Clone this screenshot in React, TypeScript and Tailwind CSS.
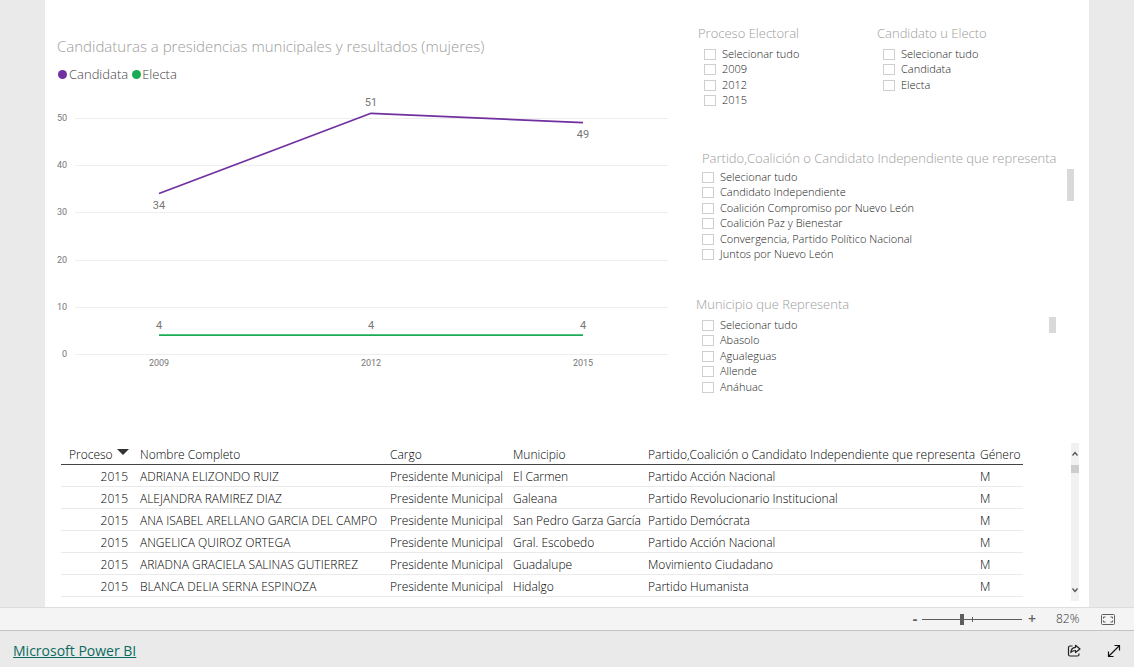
/*
 * Municipal candidacies report
 * Line chart, slicers and a detail table inside the report viewer frame
 */
type Slicer = {
  title: string;
  items: string[];
};

const process: Slicer = {
  title: "Proceso Electoral",
  items: ["Selecionar tudo", "2009", "2012", "2015"],
};

const status: Slicer = {
  title: "Candidato u Electo",
  items: ["Selecionar tudo", "Candidata", "Electa"],
};

const party: Slicer = {
  title: "Partido,Coalición o Candidato Independiente que representa",
  items: [
    "Selecionar tudo",
    "Candidato Independiente",
    "Coalición Compromiso por Nuevo León",
    "Coalición Paz y Bienestar",
    "Convergencia, Partido Político Nacional",
    "Juntos por Nuevo León",
  ],
};

const town: Slicer = {
  title: "Municipio que Representa",
  items: ["Selecionar tudo", "Abasolo", "Agualeguas", "Allende", "Anáhuac"],
};

const rows = [
  ["2015", "ADRIANA ELIZONDO RUIZ", "Presidente Municipal", "El Carmen", "Partido Acción Nacional", "M"],
  ["2015", "ALEJANDRA RAMIREZ DIAZ", "Presidente Municipal", "Galeana", "Partido Revolucionario Institucional", "M"],
  ["2015", "ANA ISABEL ARELLANO GARCIA DEL CAMPO", "Presidente Municipal", "San Pedro Garza García", "Partido Demócrata", "M"],
  ["2015", "ANGELICA QUIROZ ORTEGA", "Presidente Municipal", "Gral. Escobedo", "Partido Acción Nacional", "M"],
  ["2015", "ARIADNA GRACIELA SALINAS GUTIERREZ", "Presidente Municipal", "Guadalupe", "Movimiento Ciudadano", "M"],
  ["2015", "BLANCA DELIA SERNA ESPINOZA", "Presidente Municipal", "Hidalgo", "Partido Humanista", "M"],
];

const headers = [
  "Nombre Completo",
  "Cargo",
  "Municipio",
  "Partido,Coalición o Candidato Independiente que representa",
  "Género",
];

const years = ["2009", "2012", "2015"];
const candidates = [34, 51, 49];
const elected = [4, 4, 4];

const xAt = (i: number) => 102 + i * 212;
const yAt = (v: number) => 266 - v * 4.72;
const toPoints = (values: number[]) => values.map((v, i) => `${xAt(i)},${yAt(v)}`).join(" ");

function LineChart() {
  return (
    <svg
      viewBox="0 0 611 286"
      className="block w-full font-[Roboto,sans-serif] font-normal"
      role="img"
      aria-label="Candidaturas por año"
    >
      {[50, 40, 30, 20, 10, 0].map((v) => (
        <g key={v}>
          <line x1="18" x2="611" y1={Math.round(yAt(v)) + 0.5} y2={Math.round(yAt(v)) + 0.5} stroke="#eeeeee" />
          <text x="10" y={Math.round(yAt(v)) + 3} textAnchor="end" className="fill-[#777777] text-[9px]">
            {v}
          </text>
        </g>
      ))}
      <polyline points={toPoints(candidates)} fill="none" stroke="#7030a0" strokeWidth="1.7" strokeLinejoin="round" />
      <polyline points={toPoints(elected)} fill="none" stroke="#1aab55" strokeWidth="1.8" />
      {years.map((year, i) => (
        <g key={year} textAnchor="middle" className="fill-[#777777]">
          <text x={xAt(i)} y="278" className="text-[9px]">{year}</text>
          {/* the peak is labelled above the line, the others below */}
          <text x={xAt(i)} y={Math.round(yAt(candidates[i])) + (i === 1 ? -7 : 15)} className="text-[11px]">
            {candidates[i]}
          </text>
          <text x={xAt(i)} y="241" className="text-[11px]">{elected[i]}</text>
        </g>
      ))}
    </svg>
  );
}

function Options({ slicer }: { slicer: Slicer }) {
  return (
    <div>
      {slicer.items.map((item) => (
        <label key={item} className="flex items-center gap-[6px] text-[11px] text-[#222222] odd:h-4 even:h-[15px]">
          <input type="checkbox" className="h-[11px] w-3 shrink-0 appearance-none border border-[#cfcfcf] bg-white checked:bg-[#666666]" />
          <span className="whitespace-nowrap">{item}</span>
        </label>
      ))}
    </div>
  );
}

function Title({ text }: { text: string }) {
  return <h3 className="text-[13px] leading-5 whitespace-nowrap text-[#9c9c9c]">{text}</h3>;
}

function Chevron({ d }: { d: string }) {
  return (
    <svg viewBox="0 0 8 8" className="mx-auto size-2" fill="none" stroke="#505050" strokeWidth="1.2">
      <path d={d} />
    </svg>
  );
}

function DataTable() {
  return (
    <table className="w-full table-fixed border-separate border-spacing-0 text-left text-xs whitespace-nowrap text-black">
      <colgroup>
        <col className="w-[71px]" />
        <col className="w-[250px]" />
        <col className="w-[123px]" />
        <col className="w-[135px]" />
        <col />
        <col className="w-[51px]" />
      </colgroup>
      <thead>
        <tr className="h-[22px]">
          <th scope="col" className="border-b border-[#444444] p-0 pt-[2px] pl-2 font-light">
            <button type="button" className="flex items-center gap-1">
              Proceso
              <svg viewBox="0 0 12 12" className="size-3 shrink-0" fill="#333333">
                <path d="M0 0h12L6 6z" />
              </svg>
            </button>
          </th>
          {headers.map((h) => (
            <th key={h} scope="col" className="border-b border-[#444444] p-0 pt-[2px] pl-2 font-light">{h}</th>
          ))}
        </tr>
      </thead>
      <tbody>
        {rows.map((row) => (
          <tr key={row[1]} className="h-[22px]">
            {row.map((cell, i) => (
              <td key={i} className="border-b border-[#eaeaea] p-0 pt-[2px] pl-2 first:pr-1 first:text-right">{cell}</td>
            ))}
          </tr>
        ))}
      </tbody>
    </table>
  );
}

function StatusBar() {
  return (
    <div className="flex h-6 items-center justify-end border-t border-b border-t-[#dddddd] border-b-[#c4c4c4] bg-[#f4f4f4] pr-[19px] text-[#605e5c]">
      <button type="button" aria-label="Alejar" className="w-[14px] text-sm leading-none font-bold">-</button>
      <span className="relative flex w-[100px] items-center">
        <span className="absolute left-1/2 h-[5px] w-px bg-[#605e5c]" />
        <input
          type="range"
          aria-label="Zoom"
          min={0}
          max={100}
          defaultValue={40}
          className="h-px w-full appearance-none bg-[#605e5c] [&::-webkit-slider-thumb]:h-[11px] [&::-webkit-slider-thumb]:w-1 [&::-webkit-slider-thumb]:appearance-none [&::-webkit-slider-thumb]:bg-[#605e5c]"
        />
      </span>
      <button type="button" aria-label="Acercar" className="w-5 text-sm leading-none font-semibold">+</button>
      <span className="ml-[14px] w-[45px] text-xs text-[#333333]">82%</span>
      <button type="button" aria-label="Ajustar a la página">
        <svg viewBox="0 0 14 11" className="h-[11px] w-[14px]" fill="none" stroke="#605e5c">
          <rect x="0.5" y="0.5" width="13" height="10" rx="1" />
          <path d="M4.500 3h-2v1.500M9.500 3h2v1.500M2.500 6.500V8h2M11.500 6.500V8h-2" />
        </svg>
      </button>
    </div>
  );
}

function Footer() {
  return (
    <footer className="flex h-9 items-center bg-[#eaeaea] px-[13px] pt-1">
      <a href="#" className="text-sm font-normal text-[#0b6a5f] underline">Microsoft Power BI</a>
      <button type="button" aria-label="Compartir" className="ml-auto">
        <svg viewBox="0 0 14 14" className="size-[14px]" fill="none" stroke="#222222" strokeWidth="1.200" strokeLinejoin="round">
          <path d="M5.500 2H3A1.500 1.500 0 0 0 1.500 3.500v7A1.500 1.500 0 0 0 3 12h7.500A1.500 1.500 0 0 0 12 10.500V9.500" />
          <path d="M8.500 1.300L13 5 8.500 8.500V6.500C6.500 6.500 5 7 3.800 8.500 4 5.500 5.500 3.500 8.500 3.300z" />
        </svg>
      </button>
      <button type="button" aria-label="Pantalla completa" className="ml-[26px]">
        <svg viewBox="0 0 14 14" className="size-[14px]" fill="none" stroke="#111111" strokeWidth="1.200">
          <path d="M1.500 12.500l11-11M7.500 1.500h5v5M1.500 7.500v5h5" />
        </svg>
      </button>
    </footer>
  );
}

export default function App() {
  return (
    <div className="flex min-h-screen flex-col bg-[#eaeaea] font-['Open_Sans','Noto_Sans',sans-serif] font-light">
      <main className="mx-[45px] flex-1 bg-white">
        <div className="flex pl-3">
          <section className="min-w-0 flex-1 pt-8">
            <h2 className="text-[15px] leading-7 whitespace-nowrap text-[#9c9c9c]">
              Candidaturas a presidencias municipales y resultados (mujeres)
            </h2>
            <div className="mt-1 mb-1 flex items-center gap-1 pl-px text-[13px] leading-5 text-[#444444]">
              <span className="flex items-center gap-[2px]">
                <span className="size-[9px] rounded-full bg-[#7030a0]" />
                Candidata
              </span>
              <span className="flex items-center gap-px">
                <span className="size-[9px] rounded-full bg-[#1aab55]" />
                Electa
              </span>
            </div>
            <LineChart />
          </section>

          <aside className="ml-7 w-[393px] shrink-0 pt-[23px]">
            <div className="flex pl-[2px]">
              <section className="w-[179px]">
                <Title text={process.title} />
                <div className="pt-[3px] pl-[6px]">
                  <Options slicer={process} />
                </div>
              </section>
              <section>
                <Title text={status.title} />
                <div className="pt-[3px] pl-[6px]">
                  <Options slicer={status} />
                </div>
              </section>
            </div>

            <section className="mt-10 pl-[6px]">
              <Title text={party.title} />
              <div className="flex justify-between pt-px pr-[15px]">
                <Options slicer={party} />
                <span className="h-8 w-[7px] bg-[#d9d9d9]" />
              </div>
            </section>

            <section className="mt-8">
              <Title text={town.title} />
              <div className="flex justify-between pt-[3px] pr-[33px] pl-[6px]">
                <Options slicer={town} />
                <span className="h-4 w-[7px] bg-[#d9d9d9]" />
              </div>
            </section>
          </aside>
        </div>

        <div className="mt-12 flex items-start pr-[10px] pb-[6px] pl-4">
          <div className="min-w-0 flex-1 pb-1">
            <DataTable />
          </div>
          <div className="ml-12 flex w-2 flex-col self-stretch bg-[#f1f1f1] pt-[7px] pb-[7px]">
            <Chevron d="M1.500 5.500L4 2.500l2.500 3" />
            <span className="mt-[7px] h-2 bg-[#cdcdcd]" />
            <span className="flex-1" />
            <Chevron d="M1.500 2.500L4 5.500l2.500-3" />
          </div>
        </div>
      </main>
      <StatusBar />
      <Footer />
    </div>
  );
}
